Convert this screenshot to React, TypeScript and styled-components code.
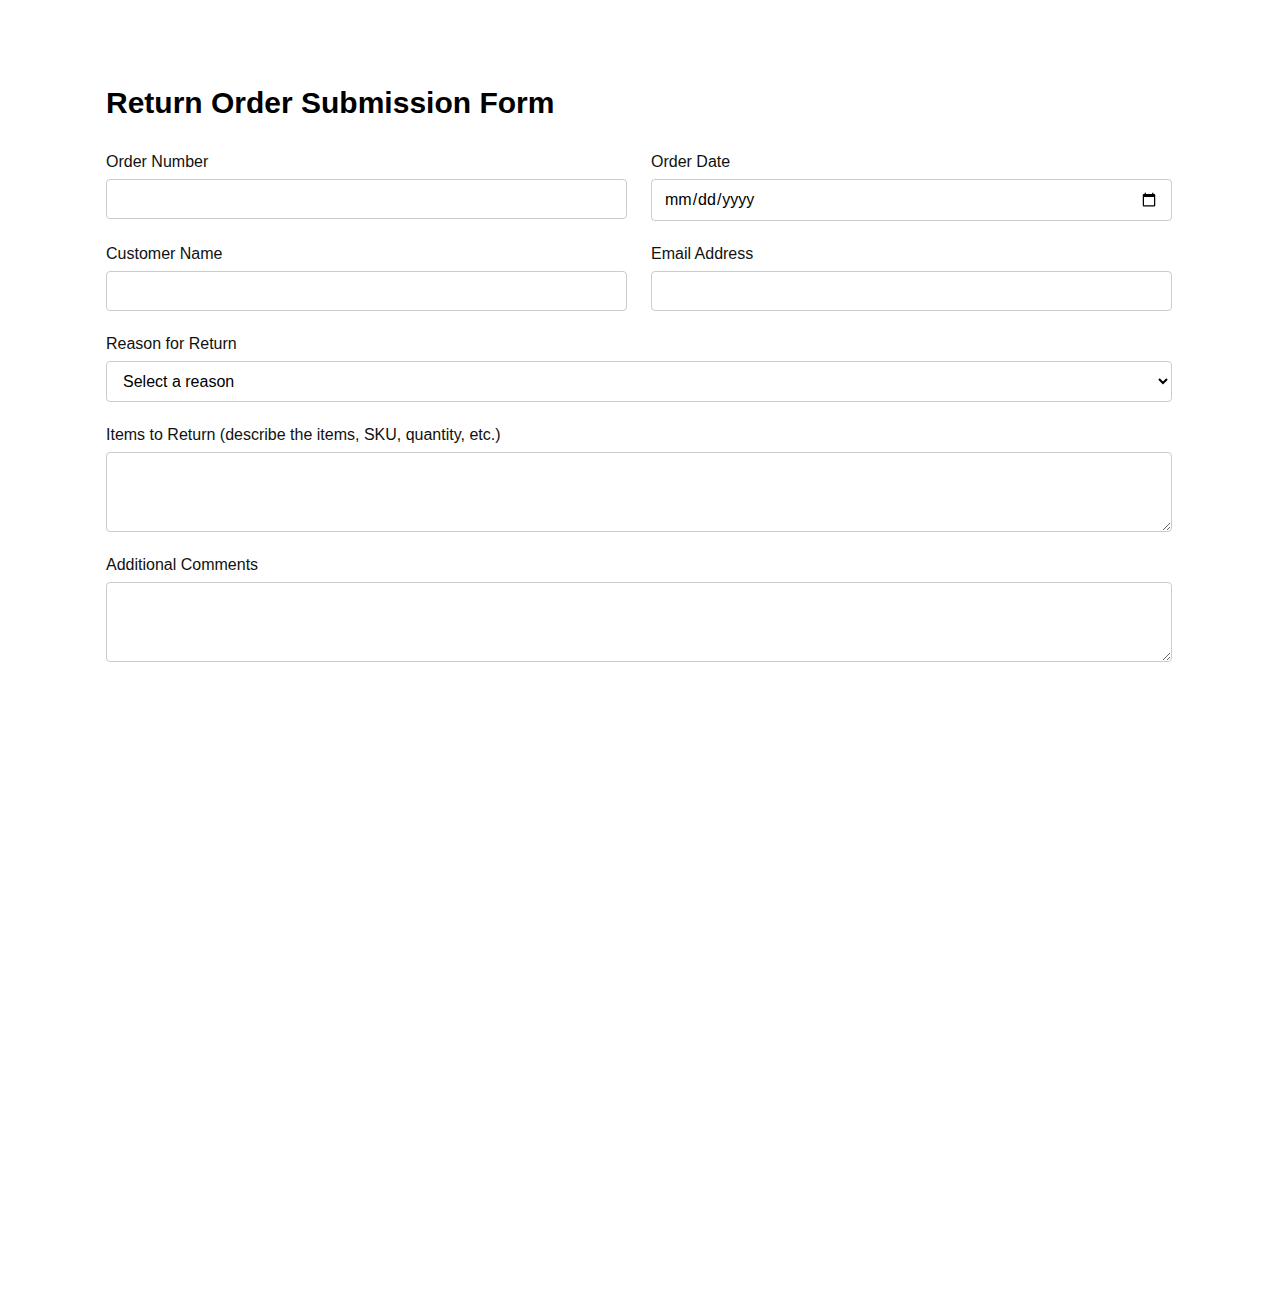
import React from "react";
import styled, { createGlobalStyle } from "styled-components";

const GlobalStyle = createGlobalStyle`
  html, body {
    margin: 0;
    padding: 0;
    background: #ffffff;
  }
  body {
    font-family: "Liberation Sans", Arial, sans-serif;
    color: #000;
  }
  * { box-sizing: border-box; }
`;

const Page = styled.div`
  max-width: 1066px;
  margin: 0 auto;
  padding-top: 85px;
`;

const Title = styled.h1`
  margin: 0 0 33px;
  font-size: 30px;
  font-weight: 700;
  line-height: 35px;
  color: #000;
`;

const Form = styled.form`
  display: flex;
  flex-direction: column;
  gap: 24px;
`;

const Row = styled.div`
  display: grid;
  grid-template-columns: 1fr 1fr;
  gap: 24px;
`;

const Field = styled.div`
  display: flex;
  flex-direction: column;
`;

const Label = styled.label`
  display: block;
  font-size: 16px;
  line-height: 18px;
  margin-bottom: 8px;
  color: #111;
`;

const controlBase = `
  width: 100%;
  font-family: "Liberation Sans", Arial, sans-serif;
  font-size: 16px;
  line-height: normal;
  padding: 10px 12px;
  border: 1px solid #cccccc;
  border-radius: 4px;
  background: #fff;
  color: #000;
  outline: none;
`;

const Input = styled.input`
  ${controlBase}
`;

const Select = styled.select`
  ${controlBase}
`;

const TextArea = styled.textarea<{ $height: number }>`
  ${controlBase}
  height: ${(p) => p.$height}px;
  resize: vertical;
  display: block;
`;

export default function App() {
  return (
    <>
      <GlobalStyle />
      <Page>
        <Title>Return Order Submission Form</Title>
        <Form onSubmit={(e) => e.preventDefault()}>
          <Row>
            <Field>
              <Label htmlFor="orderNumber">Order Number</Label>
              <Input id="orderNumber" type="text" />
            </Field>
            <Field>
              <Label htmlFor="orderDate">Order Date</Label>
              <Input id="orderDate" type="date" />
            </Field>
          </Row>
          <Row>
            <Field>
              <Label htmlFor="customerName">Customer Name</Label>
              <Input id="customerName" type="text" />
            </Field>
            <Field>
              <Label htmlFor="email">Email Address</Label>
              <Input id="email" type="email" />
            </Field>
          </Row>
          <Field>
            <Label htmlFor="reason">Reason for Return</Label>
            <Select id="reason" defaultValue="">
              <option value="">Select a reason</option>
              <option value="damaged">Damaged item</option>
              <option value="wrong">Wrong item received</option>
              <option value="size">Wrong size</option>
              <option value="other">Other</option>
            </Select>
          </Field>
          <Field>
            <Label htmlFor="items">Items to Return (describe the items, SKU, quantity, etc.)</Label>
            <TextArea id="items" $height={80} />
          </Field>
          <Field>
            <Label htmlFor="comments">Additional Comments</Label>
            <TextArea id="comments" $height={80} />
          </Field>
        </Form>
      </Page>
    </>
  );
}
